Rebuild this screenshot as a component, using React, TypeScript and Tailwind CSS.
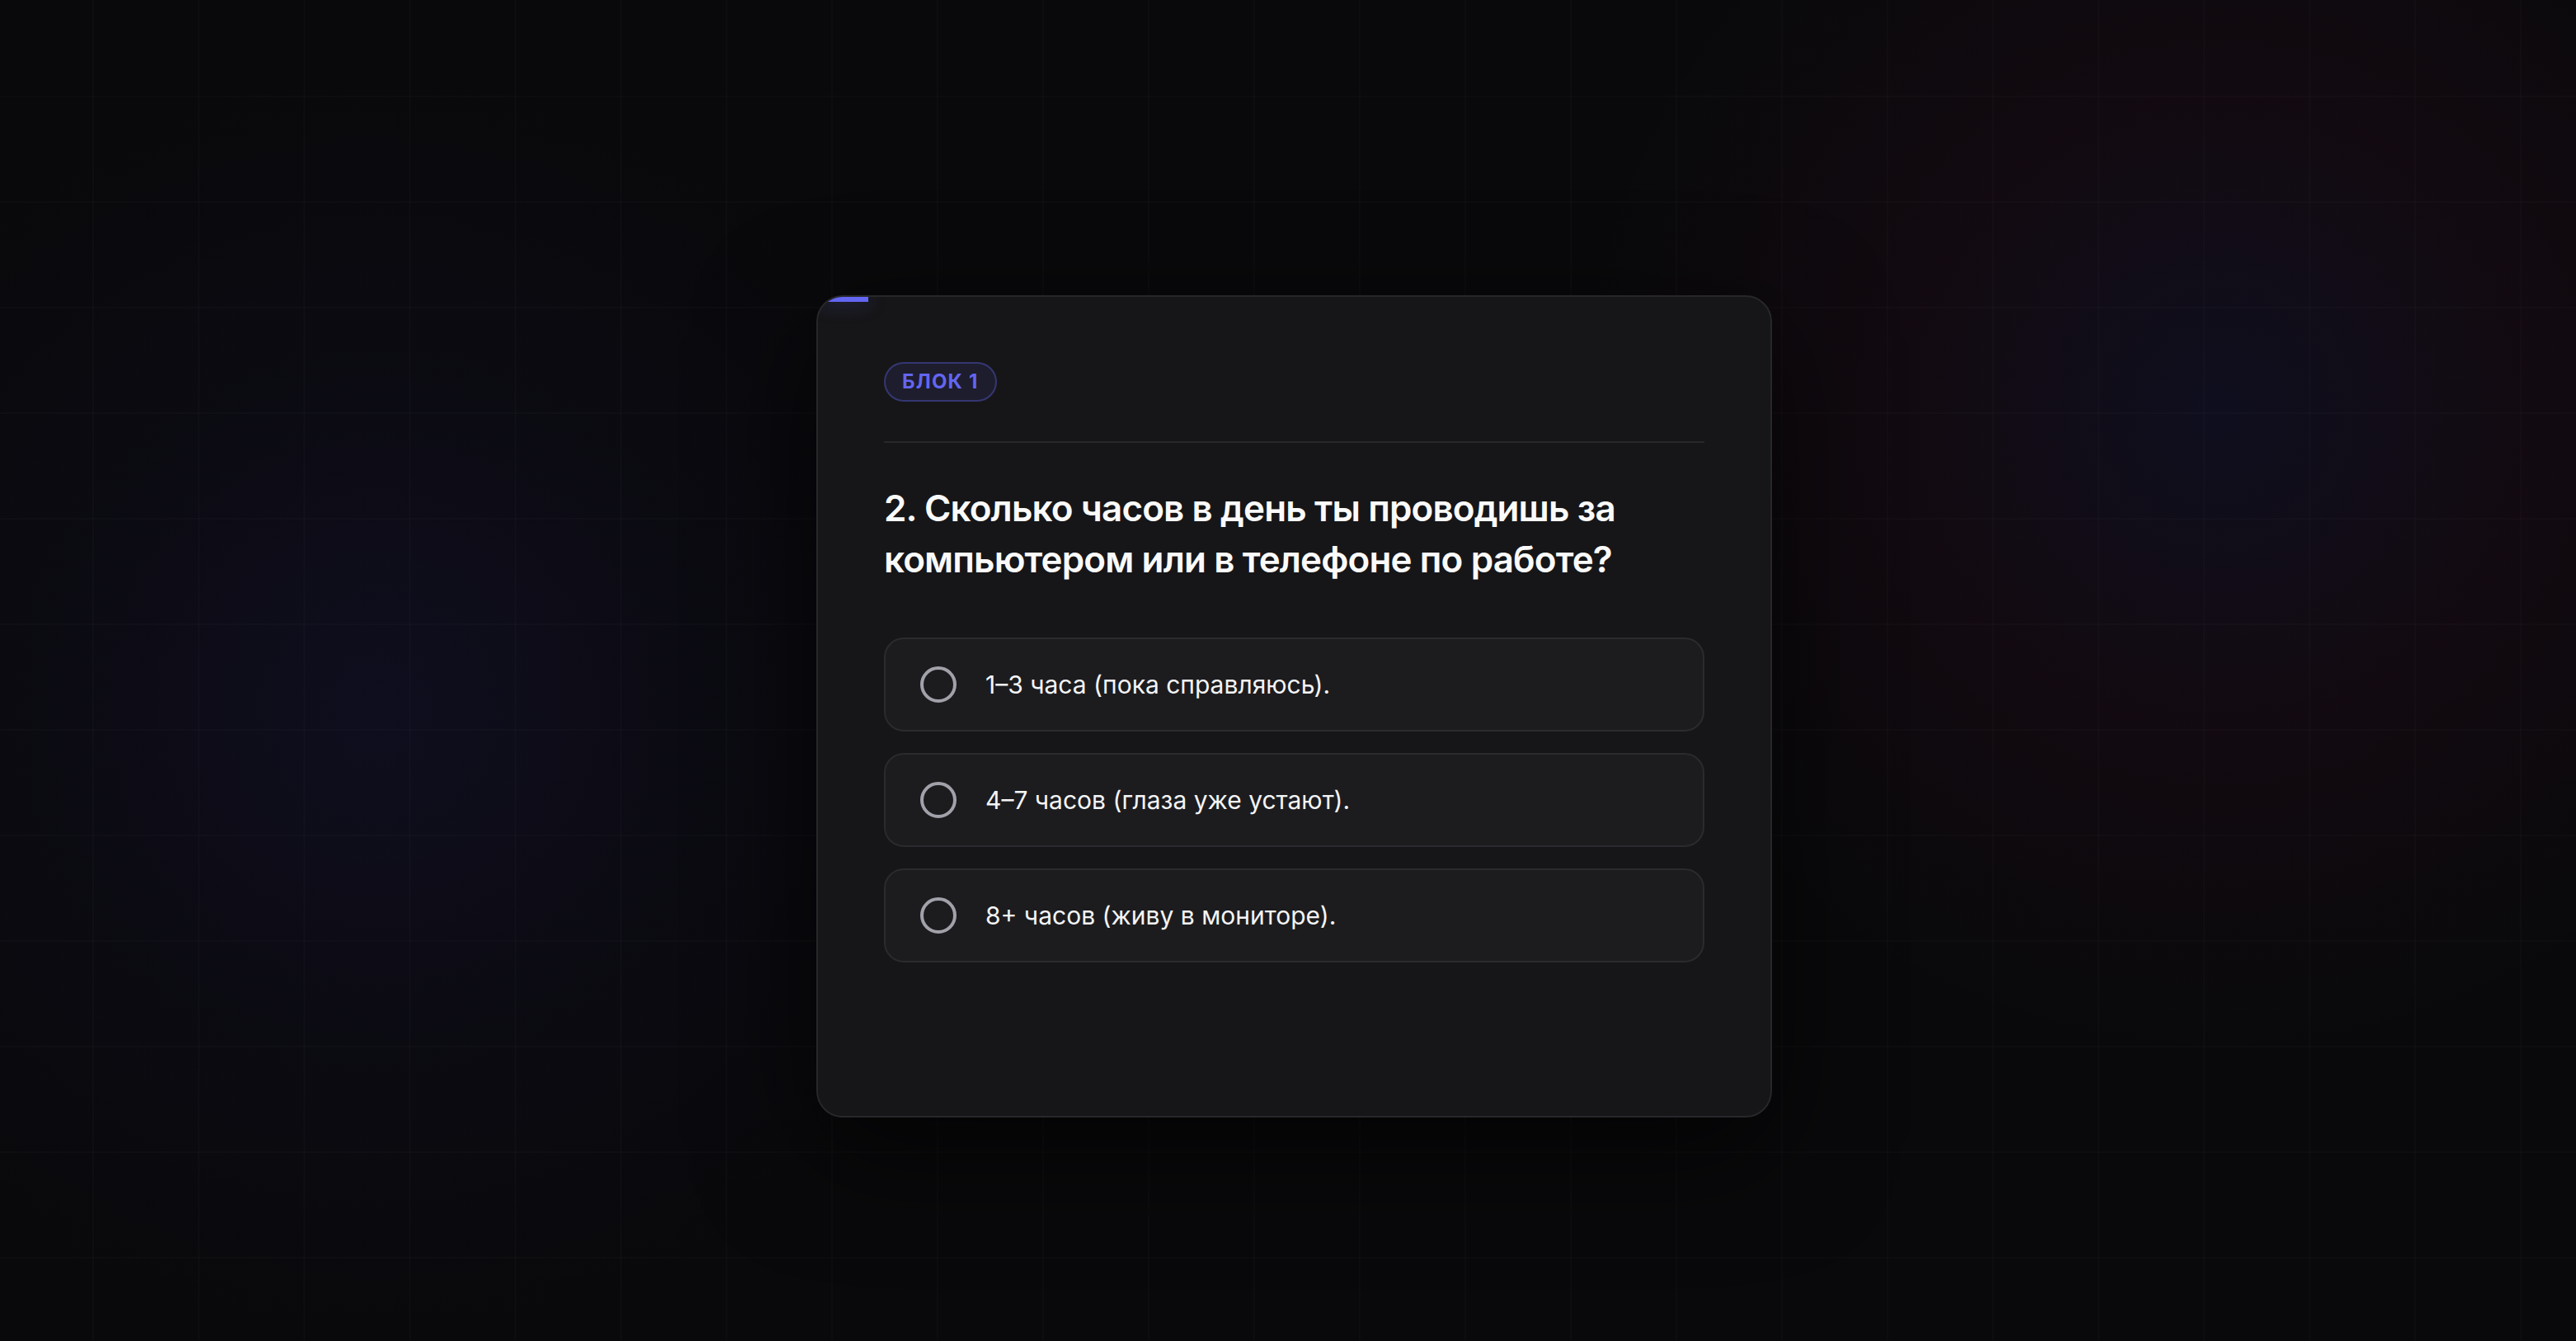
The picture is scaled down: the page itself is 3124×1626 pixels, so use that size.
import React from "react";

type Option = {
  id: string;
  label: string;
};

const options: Option[] = [
  { id: "a", label: "1–3 часа (пока справляюсь)." },
  { id: "b", label: "4–7 часов (глаза уже устают)." },
  { id: "c", label: "8+ часов (живу в мониторе)." },
];

function OptionRow({ option }: { option: Option }) {
  return (
    <button
      type="button"
      className="flex h-[114px] w-full items-center gap-[35px] rounded-[24px] border-2 border-[#2b2b2f] bg-[#1c1c1f] px-[42px] text-left"
    >
      <span className="h-[44px] w-[44px] shrink-0 rounded-full border-[4px] border-[#a1a1aa]" />
      <span className="text-[30px] leading-[44px] text-[#f4f4f5]">{option.label}</span>
    </button>
  );
}

export default function App() {
  return (
    <div
      className="flex min-h-screen w-full justify-center bg-[#09090b] pl-[15px] pt-[358px] [background-image:radial-gradient(circle_at_460px_860px,rgba(67,56,202,0.10),rgba(67,56,202,0.035)_420px,transparent_780px),radial-gradient(circle_at_2690px_500px,rgba(79,70,229,0.09),rgba(160,30,100,0.06)_380px,transparent_780px),linear-gradient(rgba(255,255,255,0.015)_2px,transparent_2px),linear-gradient(90deg,rgba(255,255,255,0.015)_2px,transparent_2px)] [background-position:0_0,0_0,112px_116px,112px_116px] [background-size:auto,auto,128px_128px,128px_128px]"
      style={{ fontFamily: "Inter, 'Noto Sans', sans-serif" }}
    >
      <div className="relative h-[997px] w-[1159px] overflow-hidden rounded-[32px] border-2 border-[#27272b] bg-[#161618] px-[80px] pt-[79px] shadow-[0_40px_140px_rgba(0,0,0,0.65)]">
        {/* progress */}
        <div className="absolute left-0 top-0 h-[6px] w-[61px] bg-[#6366f1] shadow-[0_0_24px_rgba(99,102,241,0.45)]" />

        <span className="inline-flex h-[48px] items-center rounded-full border-2 border-[#6366f1]/35 bg-[#6366f1]/10 px-[20px] text-[24px] font-bold tracking-[0.05em] text-[#6366f1]">
          БЛОК 1
        </span>

        <div className="mt-[48px] h-[2px] w-full bg-[#27272a]" />

        <h2 className="mt-[48px] text-[44px] font-semibold leading-[62px] tracking-[-0.02em] text-[#fafafa]">
          2. Сколько часов в день ты проводишь за компьютером или в телефоне по работе?
        </h2>

        <div className="mt-[64px] flex flex-col gap-[26px]">
          {options.map((option) => (
            <OptionRow key={option.id} option={option} />
          ))}
        </div>
      </div>
    </div>
  );
}
